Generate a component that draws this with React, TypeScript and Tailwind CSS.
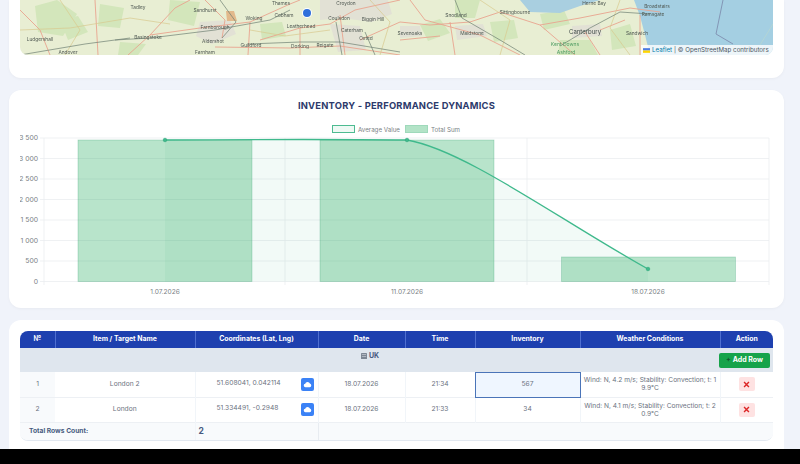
import React from "react";

const mapLabels: [string, number, number][] = [
  ["Tadley", 138, 9], ["Sandhurst", 205, 12], ["Woking", 254, 20], ["Cobham", 284, 17],
  ["Thames", 281, 4.5], ["Croydon", 346, 4.5], ["Coulsdon", 339, 20], ["Biggin Hill", 373, 21],
  ["Leatherhead", 301, 28], ["Farnborough", 215, 29], ["Basingstoke", 148, 39], ["Aldershot", 213, 43],
  ["Ludgershall", 40, 41], ["Caterham", 352, 32], ["Oxted", 366, 40], ["Guildford", 251, 47],
  ["Dorking", 300, 48], ["Reigate", 325, 47], ["Farnham", 205, 53.5], ["Andover", 68, 53.5],
  ["Snodland", 456, 17], ["Sittingbourne", 515, 14], ["Herne Bay", 594, 4.5], ["Broadstairs", 657, 8],
  ["Ramsgate", 653, 16], ["Maidstone", 472, 35], ["Sevenoaks", 410, 35], ["Sandwich", 637, 35],
];

const yTicks = [
  ["3 500", 138], ["3 000", 158.5], ["2 500", 179], ["2 000", 199.5],
  ["1 500", 220], ["1 000", 240.5], ["500", 261], ["0", 281.5],
] as const;

const rows = [
  { n: 1, name: "London 2", coords: "51.608041, 0.042114", time: "21:34", inv: "567", weather: "Wind: N, 4.2 m/s; Stability: Convection; t: 19.9°C" },
  { n: 2, name: "London", coords: "51.334491, -0.2948", time: "21:33", inv: "34", weather: "Wind: N, 4.1 m/s; Stability: Convection; t: 20.9°C" },
];

const headers = ["№", "Item / Target Name", "Coordinates (Lat, Lng)", "Date", "Time", "Inventory", "Weather Conditions", "Action"];

const greenPatches = [
  "M35 6l22 -6l20 14l-14 22l-25 -4Z", "M60 20l18 -4l10 16l-20 8Z", "M100 4l24 4l-4 20l-22 -2Z",
  "M170 0l30 2l-6 24l-26 -6Z", "M260 24l22 -2l4 14l-24 4Z", "M120 42l26 2l-8 11h-20Z",
  "M420 25l20 -6l10 14l-22 8Z", "M455 0h25l-5 18h-20Z", "M490 22l24 -2l4 18l-24 4Z",
  "M540 14l24 -4l6 14l-26 6Z", "M560 40h30l8 15h-40Z", "M610 30l20 -6l6 22l-24 4Z",
];

const towns = [
  "M320 0h68l4 14l-20 8l-30 -4l-22 2Z", "M200 22l30 -2l6 14l-24 10l-16 -8Z", "M330 24l30 2l6 24l-28 2Z",
  "M455 26l28 -2l4 12l-30 4Z", "M400 26l20 0l2 10l-22 2Z", "M572 26l28 -2l2 12l-30 2Z",
];

function MapView() {
  return (
    <div className="relative h-[55px] overflow-hidden rounded-b-lg">
      <svg viewBox="20 0 753 55" className="block h-[55px] w-[753px] blur-[0.7px]">
        <rect x="20" y="0" width="753" height="55" fill="#e8eed3" />
        {greenPatches.map((d) => (
          <path key={d} d={d} fill="#d3e6bb" />
        ))}
        {towns.map((d) => (
          <path key={d} d={d} fill="#e2e1d5" />
        ))}
        <path d="M226 11h8l3 10h-10Z" fill="#e2b98c" />
        <path d="M520 0H600L580 6L560 13L530 12Z" fill="#a9cfe0" />
        <path d="M572 0H634L640 16L645 35L650 55H773V0Z" fill="#a4cfe2" />
        <path d="M723 0L716 34L733 44" fill="none" stroke="#7f8fb0" strokeWidth="0.9" />
        <path d="M773 24L760 45" fill="none" stroke="#b6d6d2" strokeWidth="0.8" />
        <g fill="none" stroke="#e9a48f" strokeWidth="0.9">
          <path d="M128 55L150 35L200 28L250 22L290 4L300 0" />
          <path d="M205 0L225 20L222 38" />
          <path d="M20 10L40 30L50 55" />
          <path d="M95 0L98 55" />
          <path d="M150 35L175 8L190 0" />
          <path d="M300 28L330 24L355 10L400 0" />
          <path d="M400 22L430 25L470 22L500 12L540 25L580 18L630 8L660 12" />
          <path d="M410 0L425 20L480 35L520 55" />
          <path d="M340 15L345 55M300 28L300 55M250 22L248 55" />
          <path d="M585 32L600 55M640 15L640 55" />
          <path d="M215 47L290 48L340 46L400 55" />
          <path d="M260 40L300 28M360 40L400 22M450 22L455 55" />
          <path d="M400 40L440 36M540 25L575 55M600 30L625 20" />
        </g>
        <g fill="none" stroke="#d8c98e" strokeWidth="0.7">
          <path d="M20 30L70 28L130 18L170 24M60 0L80 30L65 55" />
          <path d="M250 30L285 36L330 30M370 0L390 22L380 55" />
          <path d="M480 0L510 20L500 55M620 0L610 28L630 55" />
        </g>
        <g fill="none" stroke="#6f7f72" strokeWidth="0.7">
          <path d="M115 40L150 38L215 30L270 20L290 10" />
          <path d="M20 55L85 44L130 38" />
          <path d="M220 0L236 22L222 38" />
          <path d="M248 44L300 42L340 42L400 52" />
          <path d="M455 0L462 18L500 40L525 55" />
          <path d="M560 46L590 28L620 12L650 14" />
          <path d="M336 22L342 55M365 32L375 55" />
        </g>
        <g fill="#4f5852" fontSize="4.8" fontFamily="Inter, sans-serif" textAnchor="middle">
          {mapLabels.map(([t, x, y]) => (
            <text key={t} x={x} y={y}>{t}</text>
          ))}
          <text x="585" y="34" fontSize="6" fill="#3f4a48">Canterbury</text>
          <text x="565" y="46" fontSize="5" fill="#4f9c62">Kent Downs</text>
          <text x="566" y="53.5" fontSize="5" fill="#4f9c62">Ashford</text>
        </g>
        <circle cx="307" cy="13" r="5" fill="#ffffff" />
        <circle cx="307" cy="13" r="4" fill="#2f6fdb" />
      </svg>
      <div className="absolute bottom-0 right-0 flex h-[10px] w-[132px] items-center gap-[2px] whitespace-nowrap bg-white/80 pl-[2px] font-['Inter',sans-serif] text-[6.2px] leading-none text-[#4b5563]">
        <svg viewBox="0 0 12 8" className="h-[5px] w-[7px] shrink-0">
          <rect width="12" height="4" fill="#4C7BE1" />
          <rect y="4" width="12" height="4" fill="#FFD500" />
        </svg>
        <span className="text-[#0078a8]">Leaflet</span>
        <span>| © OpenStreetMap contributors</span>
      </div>
    </div>
  );
}

function Chart() {
  const curve = "M165 140C165 140 320 139 407 140C465 150 560 220 648 269";
  return (
    <svg viewBox="20 118 753 182" className="block h-[182px] w-[753px]">
      <g fontFamily="Inter, sans-serif" fontSize="6.2" fill="#7b7f85">
        <rect x="332.5" y="125.5" width="22" height="7" fill="#eef9f4" stroke="#4dbb91" strokeWidth="1" />
        <text x="358" y="131.5">Average Value</text>
        <rect x="405.5" y="125.5" width="22" height="7" fill="#b3e3c7" stroke="#9fd9bb" strokeWidth="1" />
        <text x="431" y="131.5">Total Sum</text>
      </g>
      <g stroke="#ebedf0" strokeWidth="0.8">
        {yTicks.map(([t, y]) => (
          <line key={t} x1="40" x2="769" y1={y} y2={y} />
        ))}
        <line x1="44" x2="44" y1="138" y2="285" />
        <line x1="285" x2="285" y1="138" y2="285" />
        <line x1="527" x2="527" y1="138" y2="285" />
        <line x1="769" x2="769" y1="138" y2="285" />
      </g>
      <g fontFamily="Inter, sans-serif" fontSize="6.8" fill="#7b7f85" textAnchor="end">
        {yTicks.map(([t, y]) => (
          <text key={t} x="38" y={y + 2.4}>{t}</text>
        ))}
      </g>
      <g fontFamily="Inter, sans-serif" fontSize="6.6" fill="#7b7f85" textAnchor="middle">
        <text x="165" y="294">1.07.2026</text>
        <text x="407" y="294">11.07.2026</text>
        <text x="648" y="294">18.07.2026</text>
      </g>
      <path d={`${curve}L648 281.5L165 281.5Z`} fill="rgba(39,174,120,0.06)" />
      <g fill="rgba(39,174,96,0.33)" stroke="rgba(39,150,100,0.3)" strokeWidth="0.8">
        <rect x="78" y="140" width="174" height="141.5" />
        <rect x="320" y="140" width="174" height="141.5" />
        <rect x="561.5" y="257" width="174" height="24.5" />
      </g>
      <path d={curve} fill="none" stroke="#3fb98c" strokeWidth="1.3" />
      <g fill="#3fb98c" stroke="#2fa87b" strokeWidth="0.6">
        <circle cx="165" cy="140" r="1.8" />
        <circle cx="407" cy="140" r="1.8" />
        <circle cx="648" cy="269" r="1.8" />
      </g>
    </svg>
  );
}

function CloudButton() {
  return (
    <span className="flex h-[13px] w-[13px] shrink-0 items-center justify-center rounded-[2px] bg-[#3b82f6]">
      <svg viewBox="0 0 24 24" className="h-[9px] w-[9px]" fill="#ffffff">
        <path d="M6.5 19a4.5 4.5 0 0 1-.6-8.96A6.5 6.5 0 0 1 18.4 9.6 4.8 4.8 0 0 1 18 19Z" />
      </svg>
    </span>
  );
}

function DeleteButton() {
  return (
    <span className="mx-auto flex h-[14px] w-[16px] items-center justify-center rounded-[2px] bg-[#fee2e2]">
      <svg viewBox="0 0 10 10" className="h-[7px] w-[7px]" stroke="#dc2626" strokeWidth="2" fill="none">
        <path d="M1.5 1.5L8.5 8.5M8.5 1.5L1.5 8.5" />
      </svg>
    </span>
  );
}

function InventoryTable() {
  return (
    <div className="overflow-hidden rounded-lg border-b border-[#e2e8f0] font-['Inter',sans-serif]">
      <table className="w-[753px] table-fixed border-collapse text-center text-[6.7px] text-[#6b7280]">
        <colgroup>
          <col className="w-[35px]" />
          <col className="w-[140px]" />
          <col className="w-[123px]" />
          <col className="w-[87px]" />
          <col className="w-[70px]" />
          <col className="w-[105px]" />
          <col className="w-[140px]" />
          <col className="w-[53px]" />
        </colgroup>
        <thead>
          <tr className="h-[17px] bg-[#1e40af] text-[6.9px] font-bold text-white">
            {headers.map((h, i) => (
              <th key={h} className={i > 0 ? "border-l border-[#4f6fd0] p-0" : "p-0"}>{h}</th>
            ))}
          </tr>
        </thead>
        <tbody>
          <tr className="h-[24px] bg-[#dfe6ee]">
            <td colSpan={7} className="p-0 pb-[6px]">
              <span className="inline-flex items-center gap-[2px] text-[7px] font-bold text-[#475a80]">
                <svg viewBox="0 0 10 10" className="h-[6px] w-[6px]">
                  <rect width="10" height="10" rx="1" fill="#7d8794" />
                  <rect x="1.5" y="2" width="7" height="1.2" fill="#c5cbd3" />
                  <rect x="1.5" y="5" width="7" height="1.2" fill="#c5cbd3" />
                </svg>
                UK
              </span>
            </td>
            <td className="p-0 text-left">
              <span className="ml-[-1px] flex h-[15px] w-[51px] items-center justify-center gap-[2px] rounded-[2px] bg-[#16a34a] text-[7px] font-bold text-white">
                <span className="text-[#14532d]">+</span>
                Add Row
              </span>
            </td>
          </tr>
          {rows.map((r) => (
            <tr key={r.n} className="h-[25px] border-b border-[#edf0f4] bg-white">
              <td className="bg-[#f8fafc] p-0">{r.n}</td>
              <td className="p-0">{r.name}</td>
              <td className="border-l border-[#f1f5f9] p-0">
                <div className="flex items-center justify-between pl-[21px] pr-[4px]">
                  <span className="pb-[3px]">{r.coords}</span>
                  <CloudButton />
                </div>
              </td>
              <td className="border-l border-[#f1f5f9] p-0">18.07.2026</td>
              <td className="border-l border-[#f1f5f9] p-0">{r.time}</td>
              {r.n === 1 ? (
                <td className="border border-[#4a74b8] bg-[#eff6ff] p-0">{r.inv}</td>
              ) : (
                <td className="border-l border-[#f1f5f9] p-0">{r.inv}</td>
              )}
              <td className="break-all border-l border-[#f1f5f9] px-[1px] py-0 text-[6.6px] leading-[8px]">{r.weather}</td>
              <td className="border-l border-[#f1f5f9] p-0">
                <DeleteButton />
              </td>
            </tr>
          ))}
          <tr className="h-[18px] bg-[#f8fafc]">
            <td colSpan={2} className="p-0 pl-[9px] text-left text-[6.7px] font-bold text-[#475a80]">Total Rows Count:</td>
            <td className="border-l border-[#f1f5f9] p-0 pl-[3px] text-left text-[8.5px] font-bold text-[#475a80]">2</td>
            <td colSpan={5} className="border-l border-[#e8ecf1] p-0" />
          </tr>
        </tbody>
      </table>
    </div>
  );
}

export default function App() {
  return (
    <div className="flex h-[464px] w-[800px] flex-col overflow-hidden bg-[#f0f3fa]">
      <div className="flex flex-1 flex-col gap-[12px] overflow-hidden pl-[9px]">
        {/* Map card, scrolled so only its bottom shows */}
        <div className="h-[78px] w-[775px] shrink-0 rounded-b-xl bg-white px-[11px] shadow-[0_1px_3px_rgba(0,0,0,0.04)]">
          <MapView />
        </div>

        <div className="h-[218px] w-[775px] shrink-0 rounded-xl bg-white px-[11px] pt-[10px] shadow-[0_1px_3px_rgba(0,0,0,0.04)]">
          <h2 className="mb-[6px] h-[12px] text-center font-['Inter',sans-serif] text-[9.4px] font-bold uppercase leading-[12px] tracking-[0.2px] text-[#2d3a6b]">
            Inventory - Performance Dynamics
          </h2>
          <Chart />
        </div>

        <div className="h-[140px] w-[775px] shrink-0 rounded-xl bg-white px-[11px] pt-[11px]">
          <InventoryTable />
        </div>
      </div>
      <div className="h-[15px] shrink-0 bg-black" />
    </div>
  );
}
